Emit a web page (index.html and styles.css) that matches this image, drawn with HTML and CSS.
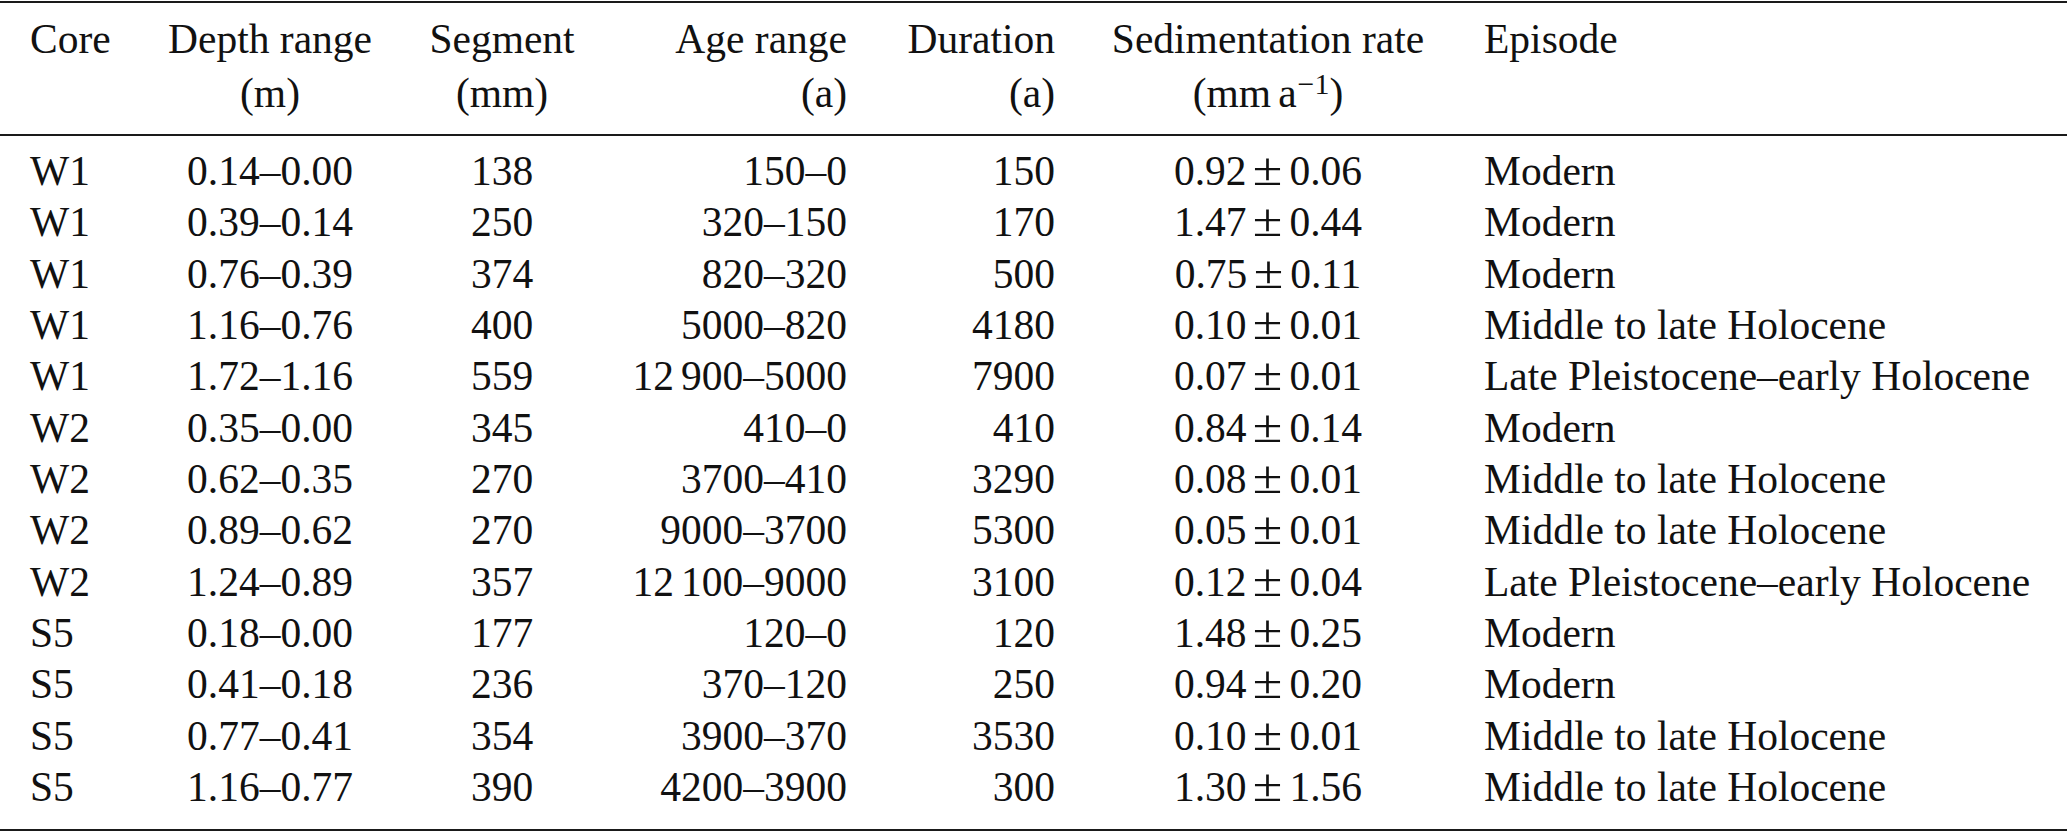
FILE: index.html
```html
<!DOCTYPE html>
<html>
<head>
<meta charset="utf-8">
<link rel="stylesheet" href="styles.css">
</head>
<body>
<table class="data">
  <colgroup>
    <col class="c-core"><col class="c-depth"><col class="c-seg"><col class="c-age"><col class="c-dur"><col class="c-rate"><col class="c-ep">
  </colgroup>
  <thead>
    <tr>
      <th class="left first">Core</th>
      <th class="center">Depth range<br>(m)</th>
      <th class="center">Segment<br>(mm)</th>
      <th class="right">Age range<br>(a)</th>
      <th class="right">Duration<br>(a)</th>
      <th class="center">Sedimentation rate<br>(mm<span class="ts"></span>a<sup>−1</sup>)</th>
      <th class="left ep">Episode</th>
    </tr>
  </thead>
  <tbody>
    <tr><td class="left first">W1</td><td class="center">0.14–0.00</td><td class="center">138</td><td class="right">150–0</td><td class="right">150</td><td class="center">0.92<span class="pm">±</span>0.06</td><td class="left ep">Modern</td></tr>
    <tr><td class="left first">W1</td><td class="center">0.39–0.14</td><td class="center">250</td><td class="right">320–150</td><td class="right">170</td><td class="center">1.47<span class="pm">±</span>0.44</td><td class="left ep">Modern</td></tr>
    <tr><td class="left first">W1</td><td class="center">0.76–0.39</td><td class="center">374</td><td class="right">820–320</td><td class="right">500</td><td class="center">0.75<span class="pm">±</span>0.11</td><td class="left ep">Modern</td></tr>
    <tr><td class="left first">W1</td><td class="center">1.16–0.76</td><td class="center">400</td><td class="right">5000–820</td><td class="right">4180</td><td class="center">0.10<span class="pm">±</span>0.01</td><td class="left ep">Middle to late Holocene</td></tr>
    <tr><td class="left first">W1</td><td class="center">1.72–1.16</td><td class="center">559</td><td class="right">12<span class="ts"></span>900–5000</td><td class="right">7900</td><td class="center">0.07<span class="pm">±</span>0.01</td><td class="left ep">Late Pleistocene–early Holocene</td></tr>
    <tr><td class="left first">W2</td><td class="center">0.35–0.00</td><td class="center">345</td><td class="right">410–0</td><td class="right">410</td><td class="center">0.84<span class="pm">±</span>0.14</td><td class="left ep">Modern</td></tr>
    <tr><td class="left first">W2</td><td class="center">0.62–0.35</td><td class="center">270</td><td class="right">3700–410</td><td class="right">3290</td><td class="center">0.08<span class="pm">±</span>0.01</td><td class="left ep">Middle to late Holocene</td></tr>
    <tr><td class="left first">W2</td><td class="center">0.89–0.62</td><td class="center">270</td><td class="right">9000–3700</td><td class="right">5300</td><td class="center">0.05<span class="pm">±</span>0.01</td><td class="left ep">Middle to late Holocene</td></tr>
    <tr><td class="left first">W2</td><td class="center">1.24–0.89</td><td class="center">357</td><td class="right">12<span class="ts"></span>100–9000</td><td class="right">3100</td><td class="center">0.12<span class="pm">±</span>0.04</td><td class="left ep">Late Pleistocene–early Holocene</td></tr>
    <tr><td class="left first">S5</td><td class="center">0.18–0.00</td><td class="center">177</td><td class="right">120–0</td><td class="right">120</td><td class="center">1.48<span class="pm">±</span>0.25</td><td class="left ep">Modern</td></tr>
    <tr><td class="left first">S5</td><td class="center">0.41–0.18</td><td class="center">236</td><td class="right">370–120</td><td class="right">250</td><td class="center">0.94<span class="pm">±</span>0.20</td><td class="left ep">Modern</td></tr>
    <tr><td class="left first">S5</td><td class="center">0.77–0.41</td><td class="center">354</td><td class="right">3900–370</td><td class="right">3530</td><td class="center">0.10<span class="pm">±</span>0.01</td><td class="left ep">Middle to late Holocene</td></tr>
    <tr><td class="left first">S5</td><td class="center">1.16–0.77</td><td class="center">390</td><td class="right">4200–3900</td><td class="right">300</td><td class="center">1.30<span class="pm">±</span>1.56</td><td class="left ep">Middle to late Holocene</td></tr>
  </tbody>
</table>
</body>
</html>
```
FILE: styles.css
```css
html, body {
  margin: 0;
  padding: 0;
  background: #ffffff;
}

body {
  font-family: "Liberation Serif", "Times New Roman", serif;
  font-size: 41.5px;
  color: #111111;
}

.data {
  width: 2067px;
  table-layout: fixed;
  border-collapse: collapse;
  margin-top: 1px;
  border-top: 2px solid #1a1a1a;
  border-bottom: 2px solid #1a1a1a;
}

.c-core { width: 150px; }
.c-depth { width: 240px; }
.c-seg { width: 224px; }
.c-age { width: 263px; }
.c-dur { width: 208px; }
.c-rate { width: 366px; }
.c-ep { width: 616px; }

.data th,
.data td {
  padding: 0;
  font-weight: normal;
  white-space: nowrap;
  vertical-align: top;
}

.data th {
  line-height: 54px;
  padding-top: 9px;
  padding-bottom: 14px;
  border-bottom: 2px solid #1a1a1a;
}

.data td {
  line-height: 51.33px;
}

.data tbody tr:first-child td {
  padding-top: 10px;
}

.data tbody tr:last-child td {
  padding-bottom: 16px;
}

.left { text-align: left; }
.center { text-align: center; }
.right { text-align: right; }

.data .first { padding-left: 30px; }
.data .right { padding-right: 30px; }
.data .ep { padding-left: 33px; }

sup {
  font-size: 0.72em;
  line-height: 0;
  vertical-align: 0.45em;
  margin-left: 1px;
}

.pm {
  display: inline-block;
  font-size: 1.1em;
  line-height: 1;
  margin: 0 0.196em;
  transform: scaleX(1.18);
}

.ts {
  display: inline-block;
  width: 0.17em;
}
```
